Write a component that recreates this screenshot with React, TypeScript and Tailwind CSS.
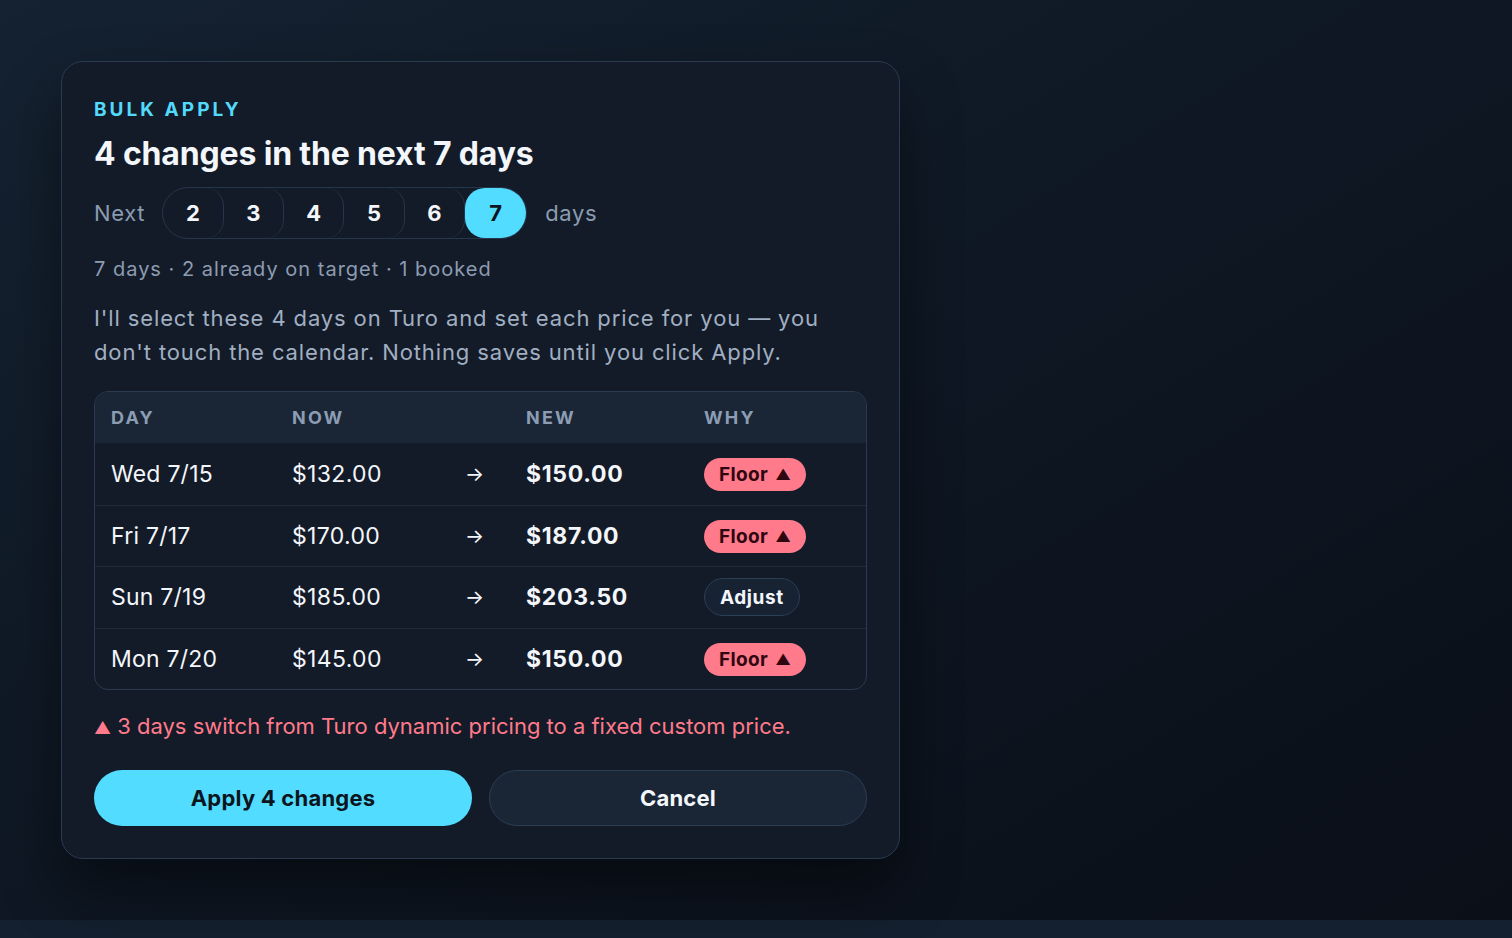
import React from "react";

const rows = [
  { day: "Wed 7/15", now: "$132.00", next: "$150.00", why: "floor" },
  { day: "Fri 7/17", now: "$170.00", next: "$187.00", why: "floor" },
  { day: "Sun 7/19", now: "$185.00", next: "$203.50", why: "adjust" },
  { day: "Mon 7/20", now: "$145.00", next: "$150.00", why: "floor" },
];

function Badge({ kind }: { kind: string }) {
  if (kind === "floor") {
    return (
      <span className="inline-flex items-center h-[33px] px-[15px] rounded-full bg-[#ff7a8b] text-[#2e0710] text-[19px] font-bold leading-none tracking-[0.02em]">
        Floor <span className="ml-[7px] text-[15px]">▲</span>
      </span>
    );
  }
  return (
    <span className="inline-flex items-center h-[38px] px-[15px] rounded-full bg-[#172233] border border-[#2d3f55] text-[#f3f6fa] text-[19px] font-bold leading-none tracking-[0.03em]">
      Adjust
    </span>
  );
}

export default function App() {
  return (
    <div className="min-h-screen bg-[#14202f]" style={{ fontFamily: "Inter, 'Noto Sans', sans-serif" }}>
      <div className="h-[920px] bg-gradient-to-br from-[#152231] via-[#0e1723] to-[#0a0f18] pt-[61px] pl-[61px]">
        <div className="w-[839px] rounded-[22px] border border-[#2a3a4f] bg-[#131b28] p-[32px] shadow-[0_30px_60px_rgba(0,0,0,0.45)]">
          <div className="mt-[2px] text-[19px] leading-[28px] font-bold tracking-[0.16em] text-[#52d9fb]">BULK APPLY</div>
          <div className="mt-[10px] text-[32px] leading-[40px] font-bold tracking-[-0.005em] text-[#f3f6fa]">
            4 changes in the next 7 days
          </div>

          <div className="mt-[13px] flex items-center">
            <span className="text-[22px] tracking-[0.03em] text-[#8a9bb1]">Next</span>
            <div className="ml-[17px] flex h-[52px] rounded-full border border-[#26364a] overflow-hidden">
              {[2, 3, 4, 5, 6, 7].map((n) => (
                <div
                  key={n}
                  className={
                    n === 7
                      ? "w-[61px] h-full rounded-[20px] bg-[#52dcff] text-[#0b1520] flex items-center justify-center text-[22px] font-bold"
                      : "w-[60.4px] h-full rounded-r-[18px] border-r border-[#26364a] text-[#f3f6fa] flex items-center justify-center text-[22px] font-bold"
                  }
                >
                  {n}
                </div>
              ))}
            </div>
            <span className="ml-[18px] text-[22px] tracking-[0.03em] text-[#8a9bb1]">days</span>
          </div>

          <div className="mt-[16px] text-[20px] leading-[28px] tracking-[0.05em] text-[#8d9cb1]">
            7 days · 2 already on target · 1 booked
          </div>

          <p className="mt-[18px] text-[22px] leading-[34px] tracking-[0.04em] text-[#a1afc2]">
            I'll select these 4 days on Turo and set each price for you — you don't touch the calendar. Nothing saves until you click Apply.
          </p>

          <div className="mt-[22px] rounded-[14px] border border-[#2a3a4f] overflow-hidden">
            <div className="grid grid-cols-[181px_173px_61px_178px_1fr] items-center h-[51px] px-[16px] bg-[#1a2536] text-[18px] font-bold tracking-[0.12em] text-[#8c9db3]">
              <span>DAY</span>
              <span>NOW</span>
              <span></span>
              <span>NEW</span>
              <span>WHY</span>
            </div>
            {rows.map((r, i) => (
              <div
                key={i}
                className={
                  "grid grid-cols-[181px_173px_61px_178px_1fr] items-center h-[61.5px] px-[16px] text-[23px] text-[#f3f6fa]" +
                  (i > 0 ? " border-t border-[#1f2b3b]" : "")
                }
              >
                <span className="tracking-[0.01em]">{r.day}</span>
                <span className="tracking-[0.015em]">{r.now}</span>
                <span className="text-[20px]">→</span>
                <span className="font-bold tracking-[0.03em]">{r.next}</span>
                <span>
                  <Badge kind={r.why} />
                </span>
              </div>
            ))}
          </div>

          <div className="mt-[20px] text-[22px] leading-[32px] text-[#ff7a8b]">
            <span className="text-[17px] mr-[6px]">▲</span>3 days switch from Turo dynamic pricing to a fixed custom price.
          </div>

          <div className="mt-[26px] grid grid-cols-2 gap-[17px]">
            <button className="h-[56px] rounded-full bg-[#52dcff] text-[#0b1520] text-[22px] font-bold tracking-[0.01em]">Apply 4 changes</button>
            <button className="h-[56px] rounded-full bg-[#1a2536] border border-[#2c3e54] text-[#f3f6fa] text-[22px] font-bold tracking-[0.01em]">Cancel</button>
          </div>
        </div>
      </div>
    </div>
  );
}
